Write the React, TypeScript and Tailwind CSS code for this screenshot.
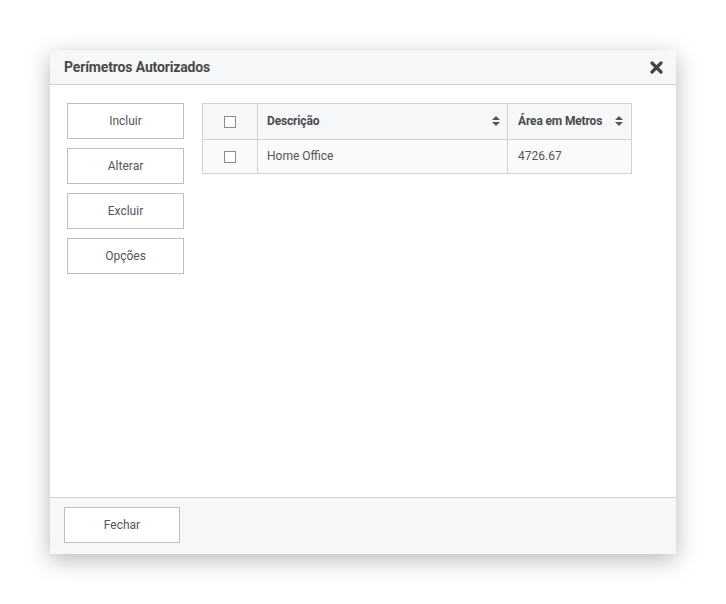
import React from "react";

const font = { fontFamily: "Roboto, 'Liberation Sans', sans-serif" };

function SortIcon() {
  return (
    <svg width="8" height="12" viewBox="0 0 8 12" className="shrink-0 mt-[1px]">
      <path d="M0 5 L4 1 L8 5 Z" fill="#555" />
      <path d="M0 7 L4 11 L8 7 Z" fill="#555" />
    </svg>
  );
}

function Box() {
  return <div className="w-[12px] h-[12px] border border-[#8a8a8a] bg-white" />;
}

function SideButton({ label }: { label: string }) {
  return (
    <button className="w-[117px] h-[36px] border border-[#bdbdbd] bg-white text-[12px] text-[#555] pb-[1px]">
      {label}
    </button>
  );
}

export default function App() {
  return (
    <div className="w-[726px] h-[604px] bg-white pt-[50px] pl-[50px]" style={font}>
      <div className="w-[626px] h-[504px] bg-white flex flex-col shadow-[0_6px_22px_rgba(0,0,0,0.28)]">
        <div className="h-[35px] shrink-0 bg-[#f6f7f9] border-b border-[#cfd0d4] flex items-center justify-between pl-[14px] pr-[13px]">
          <span className="text-[14px] font-bold text-[#4a4a4a] tracking-[-0.15px]">Perímetros Autorizados</span>
          <svg width="13" height="13" viewBox="0 0 13 13">
            <path d="M2 2 L11 11 M11 2 L2 11" stroke="#454545" strokeWidth="3.2" strokeLinecap="round" />
          </svg>
        </div>
        <div className="flex-1 flex gap-[18px] pt-[18px] pl-[17px]">
          <div className="flex flex-col gap-[9px]">
            <SideButton label="Incluir" />
            <SideButton label="Alterar" />
            <SideButton label="Excluir" />
            <SideButton label="Opções" />
          </div>
          <div className="w-[430px] self-start border border-[#d2d2d4] text-[12px] text-[#555]">
            <div className="flex h-[36px] bg-[#f6f7f9] border-b border-[#d2d2d4]">
              <div className="w-[55px] flex items-center justify-center border-r border-[#d2d2d4]">
                <Box />
              </div>
              <div className="w-[250px] flex items-center justify-between pl-[9px] pr-[7px] pb-[2px] border-r border-[#d2d2d4] font-bold text-[#4a4a4a] tracking-[-0.15px]">
                <span>Descrição</span>
                <SortIcon />
              </div>
              <div className="flex-1 flex items-center justify-between pl-[10px] pr-[8px] pb-[2px] font-bold text-[#4a4a4a] tracking-[-0.15px]">
                <span>Área em Metros</span>
                <SortIcon />
              </div>
            </div>
            <div className="flex h-[33px] bg-[#fafafa]">
              <div className="w-[55px] flex items-center justify-center border-r border-[#d2d2d4]">
                <Box />
              </div>
              <div className="w-[250px] flex items-center pl-[9px] pb-[1px] border-r border-[#d2d2d4]">
                Home Office
              </div>
              <div className="flex-1 flex items-center pl-[10px] pb-[1px]">4726.67</div>
            </div>
          </div>
        </div>
        <div className="h-[57px] shrink-0 bg-[#f6f7f9] border-t border-[#cfd0d4] pt-[9px] pl-[14px]">
          <button className="w-[116px] h-[36px] border border-[#bdbdbd] bg-white text-[12px] text-[#555]">
            Fechar
          </button>
        </div>
      </div>
    </div>
  );
}
